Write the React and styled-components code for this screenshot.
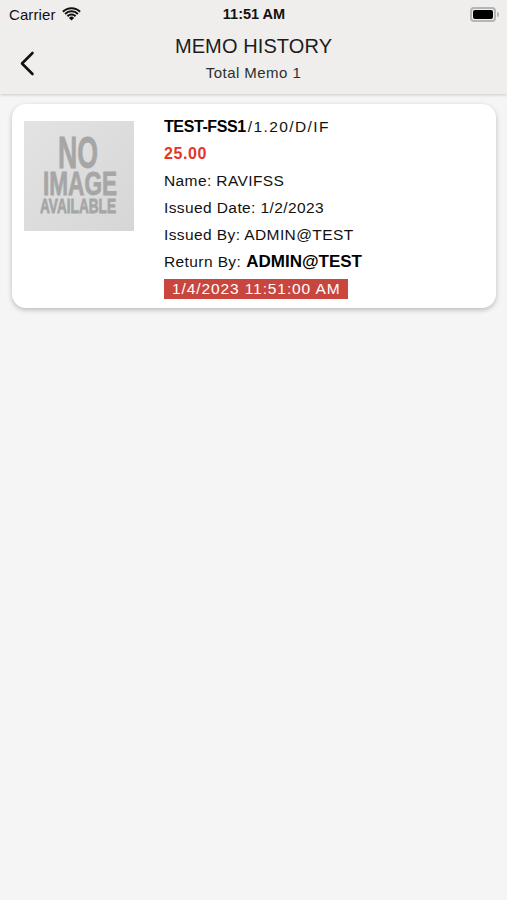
import React from 'react';
import styled, { createGlobalStyle } from 'styled-components';

const GlobalStyle = createGlobalStyle`
  body {
    margin: 0;
    background: #f5f5f5;
    font-family: "Liberation Sans", Arial, sans-serif;
    color: #111;
  }
`;

const Screen = styled.div`
  width: 507px;
  min-height: 900px;
  background: #f5f5f5;
`;

const Header = styled.header`
  background: #efeeec;
  box-shadow: 0 1px 3px rgba(0, 0, 0, 0.18);
  height: 94px;
  display: flex;
  flex-direction: column;
`;

const StatusBar = styled.div`
  height: 28px;
  display: grid;
  grid-template-columns: 1fr auto 1fr;
  align-items: center;
  padding: 0 8px 0 9px;
  font-size: 15px;
  color: #111;
`;

const Carrier = styled.div`
  display: flex;
  align-items: center;
  gap: 6px;
  letter-spacing: 0.1px;
`;

const Clock = styled.div`
  font-weight: 700;
  font-size: 14.5px;
`;

const Battery = styled.div`
  justify-self: end;
  display: flex;
  align-items: center;
`;

const BatteryBody = styled.div`
  width: 20px;
  height: 9px;
  border: 2px solid #b5b5b5;
  border-radius: 4px;
  padding: 1px;
  display: flex;
  span {
    flex: 1;
    background: #000;
    border-radius: 2px;
  }
`;

const BatteryCap = styled.div`
  width: 2px;
  height: 5px;
  margin-left: 1px;
  background: #b5b5b5;
  border-radius: 0 2px 2px 0;
`;

const NavBar = styled.div`
  flex: 1;
  display: grid;
  grid-template-columns: 60px 1fr 60px;
  align-items: center;
`;

const BackButton = styled.button`
  border: none;
  background: none;
  padding: 0 0 0 19px;
  margin-top: 4px;
  display: flex;
  align-items: center;
  cursor: pointer;
`;

const TitleBlock = styled.div`
  display: flex;
  flex-direction: column;
  align-items: center;
  padding-bottom: 6px;
`;

const Title = styled.h1`
  margin: 0;
  font-size: 20px;
  font-weight: 400;
  color: #1c1c1c;
  line-height: 26px;
  letter-spacing: 0.1px;
`;

const Subtitle = styled.div`
  font-size: 15px;
  color: #2e2e2e;
  line-height: 22px;
  margin-top: 3px;
  letter-spacing: 0.45px;
`;

const List = styled.main`
  padding: 10px 11px 0 12px;
`;

const Card = styled.article`
  background: #fff;
  border-radius: 14px;
  box-shadow: 0 2px 5px rgba(0, 0, 0, 0.24);
  padding: 9px 12px 6px;
  display: flex;
  align-items: flex-start;
  gap: 30px;
`;

const Thumb = styled.div`
  width: 110px;
  height: 110px;
  margin-top: 8px;
  flex-shrink: 0;
  svg {
    display: block;
  }
`;

const Details = styled.div`
  display: flex;
  flex-direction: column;
`;

const Line = styled.div`
  height: 27px;
  display: flex;
  align-items: center;
  font-size: ${p => p.$size || 15.5}px;
  font-weight: ${p => (p.$bold ? 700 : 400)};
  color: ${p => p.$color || '#111'};
  letter-spacing: ${p => p.$spacing ?? 0.4}px;
  white-space: nowrap;
`;

const Code = styled.span`
  font-weight: 700;
  font-size: 16px;
  letter-spacing: -0.4px;
  color: #000;
`;

const Suffix = styled.span`
  font-size: 15.5px;
  letter-spacing: 1.4px;
  margin-left: 2px;
`;

const Strong = styled.span`
  font-weight: 700;
  font-size: 17px;
  letter-spacing: 0;
  color: #000;
  margin-left: 5px;
`;

const DateTag = styled.span`
  display: inline-block;
  background: #c8463d;
  color: #fff;
  font-size: 15.5px;
  letter-spacing: 0.9px;
  height: 20px;
  line-height: 20px;
  padding: 0 7px 0 8px;
`;

const WifiIcon = () => (
  <svg width="19" height="14" viewBox="0 0 19 14">
    <path d="M9.5 13.6 L6.9 10.9 A3.7 3.7 0 0 1 12.1 10.9 Z" fill="#111" />
    <path d="M4.7 8.6 A6.8 6.8 0 0 1 14.3 8.6 L12.9 10 A4.8 4.8 0 0 0 6.1 10 Z" fill="#111" />
    <path d="M2.4 6.3 A10 10 0 0 1 16.6 6.3 L15.2 7.7 A8 8 0 0 0 3.8 7.7 Z" fill="#111" />
    <path d="M0.2 4 A13.2 13.2 0 0 1 18.8 4 L17.4 5.4 A11.2 11.2 0 0 0 1.6 5.4 Z" fill="#111" />
  </svg>
);

const ChevronLeft = () => (
  <svg width="16" height="25" viewBox="0 0 16 25">
    <path d="M13.5 2 L3 12.5 L13.5 23" fill="none" stroke="#111" strokeWidth="2.6" strokeLinecap="round" strokeLinejoin="round" />
  </svg>
);

// placeholder picture, the words are part of the drawing
const NoImage = () => (
  <svg width="110" height="110" viewBox="0 0 110 110">
    <defs>
      <linearGradient id="ph" x1="0" y1="0" x2="1" y2="1">
        <stop offset="0" stopColor="#e3e3e3" />
        <stop offset="1" stopColor="#d6d6d6" />
      </linearGradient>
    </defs>
    <rect width="110" height="110" fill="url(#ph)" />
    <g fill="#a6a6a6" stroke="#a6a6a6" strokeWidth="0.8" fontFamily="'Liberation Sans', Arial, sans-serif" fontWeight="700">
      <text x="34" y="47" fontSize="44" textLength="40" lengthAdjust="spacingAndGlyphs">NO</text>
      <text x="19" y="74" fontSize="33" textLength="74" lengthAdjust="spacingAndGlyphs">IMAGE</text>
      <text x="16" y="92" fontSize="21" textLength="76" lengthAdjust="spacingAndGlyphs">AVAILABLE</text>
    </g>
  </svg>
);

const memo = {
  code: 'TEST-FSS1',
  suffix: '/1.20/D/IF',
  amount: '25.00',
  name: 'RAVIFSS',
  issuedDate: '1/2/2023',
  issuedBy: 'ADMIN@TEST',
  returnBy: 'ADMIN@TEST',
  returnedAt: '1/4/2023 11:51:00 AM',
};

const MemoCard = ({ item }) => (
  <Card>
    <Thumb>
      <NoImage />
    </Thumb>
    <Details>
      <Line>
        <Code>{item.code}</Code>
        <Suffix>{item.suffix}</Suffix>
      </Line>
      <Line $bold $size={16} $color="#e2352b" $spacing={0.6}>{item.amount}</Line>
      <Line>Name: {item.name}</Line>
      <Line>Issued Date: {item.issuedDate}</Line>
      <Line>Issued By: {item.issuedBy}</Line>
      <Line>
        Return By:<Strong>{item.returnBy}</Strong>
      </Line>
      <Line>
        <DateTag>{item.returnedAt}</DateTag>
      </Line>
    </Details>
  </Card>
);

export default function App() {
  return (
    <Screen>
      <GlobalStyle />
      <Header>
        <StatusBar>
          <Carrier>
            Carrier <WifiIcon />
          </Carrier>
          <Clock>11:51 AM</Clock>
          <Battery>
            <BatteryBody><span /></BatteryBody>
            <BatteryCap />
          </Battery>
        </StatusBar>
        <NavBar>
          <BackButton aria-label="Back">
            <ChevronLeft />
          </BackButton>
          <TitleBlock>
            <Title>MEMO HISTORY</Title>
            <Subtitle>Total Memo 1</Subtitle>
          </TitleBlock>
          <div />
        </NavBar>
      </Header>
      <List>
        <MemoCard item={memo} />
      </List>
    </Screen>
  );
}
